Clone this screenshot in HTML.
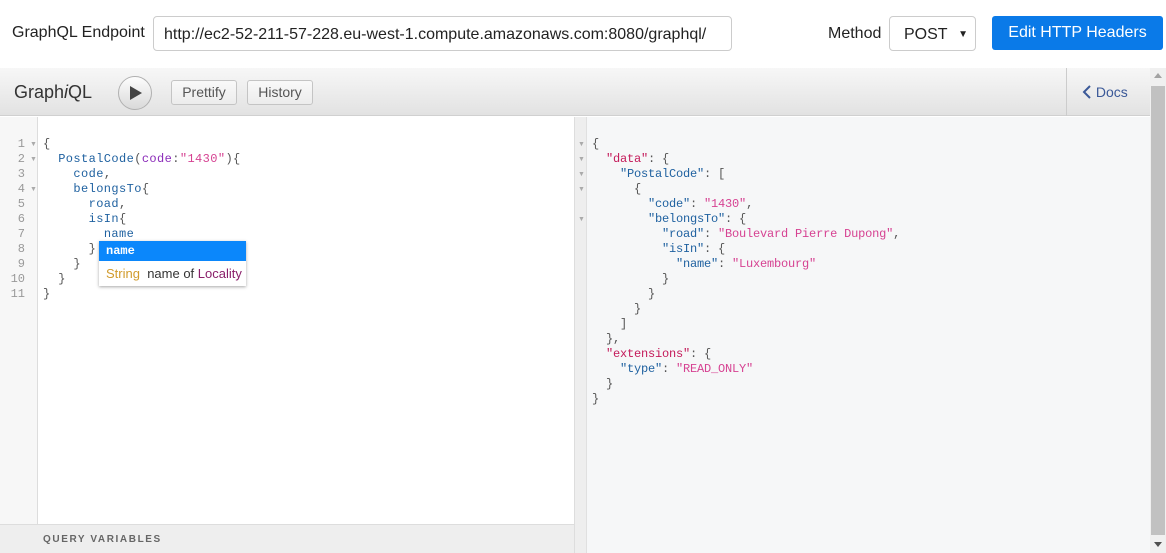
<!DOCTYPE html>
<html><head><meta charset="utf-8"><style>
*{margin:0;padding:0;box-sizing:border-box}
body{width:1166px;height:553px;overflow:hidden;background:#fff;font-family:"Liberation Sans",Arial,sans-serif;position:relative}
.abs{position:absolute}
.mono{font-family:"Liberation Mono",monospace;font-size:12px;line-height:15px;white-space:pre}
.q{letter-spacing:0.4px}
.ln{position:absolute;left:0;width:25px;text-align:right;color:#999;font-family:"Liberation Mono",monospace;font-size:12px;line-height:15px}
.fa{position:absolute;color:#aaa;font-size:7px;line-height:15px}
.p{color:#555}.f{color:#1f61a0}.a{color:#8b2bb9}.s{color:#d64292}.k{color:#c41a5a}
.btn{position:absolute;top:80px;height:25px;border:1px solid #c4c4c4;border-radius:3px;background:linear-gradient(#f9f9f9,#ececec);color:#555;font-size:14px;line-height:23px;text-align:center}
</style></head><body>
<div class="abs" style="left:12px;top:24px;font-size:16px;color:#222">GraphQL Endpoint</div>
<div class="abs" style="left:153px;top:16px;width:579px;height:35px;border:1px solid #ccc;border-radius:4px;font-size:16px;line-height:35px;padding-left:10px;color:#222">http://ec2-52-211-57-228.eu-west-1.compute.amazonaws.com:8080/graphql/</div>
<div class="abs" style="left:828px;top:25px;font-size:16px;color:#222">Method</div>
<div class="abs" style="left:889px;top:16px;width:87px;height:35px;border:1px solid #ccc;border-radius:4px;font-size:16px;line-height:35px;padding-left:14px;color:#222">POST<span style="position:absolute;right:7px;font-size:10px">▼</span></div>
<div class="abs" style="left:992px;top:16px;width:171px;height:34px;background:#0a7ae8;border-radius:3px;color:#fff;font-size:16px;line-height:33px;text-align:center">Edit HTTP Headers</div>

<div class="abs" style="left:0;top:68px;width:1150px;height:48px;background:linear-gradient(#f7f7f7,#e2e2e2);border-bottom:1px solid #d0d0d0"></div>
<div class="abs" style="left:14px;top:82px;font-size:18px;color:#333">Graph<i>i</i>QL</div>
<div class="abs" style="left:118px;top:76px;width:34px;height:34px;border-radius:50%;border:1px solid #b0b0b0;background:linear-gradient(#fdfdfd,#d9d9d9)"><svg width="32" height="32" style="position:absolute;left:0;top:0"><path d="M11 9 L23 16 L11 23 Z" fill="#444"/></svg></div>
<div class="btn" style="left:171px;width:66px">Prettify</div>
<div class="btn" style="left:247px;width:66px">History</div>
<div class="abs" style="left:1066px;top:68px;width:1px;height:48px;background:#ccc"></div>
<div class="abs" style="left:1082px;top:84px;font-size:14px;color:#3b5998"><svg width="10" height="14" style="vertical-align:-2px"><path d="M8 1 L2 7 L8 13" stroke="#3b5998" stroke-width="2" fill="none"/></svg> Docs</div>

<div class="abs" style="left:0;top:117px;width:38px;height:407px;background:#f7f7f7;border-right:1px solid #ddd"></div>
<div class="abs" style="left:0;top:137px">
<div class="ln" style="top:0">1</div><div class="ln" style="top:15px">2</div><div class="ln" style="top:30px">3</div><div class="ln" style="top:45px">4</div><div class="ln" style="top:60px">5</div><div class="ln" style="top:75px">6</div><div class="ln" style="top:90px">7</div><div class="ln" style="top:105px">8</div><div class="ln" style="top:120px">9</div><div class="ln" style="top:135px">10</div><div class="ln" style="top:150px">11</div>
<div class="fa" style="left:30px;top:0">▼</div><div class="fa" style="left:30px;top:15px">▼</div><div class="fa" style="left:30px;top:45px">▼</div>
</div>
<div class="abs mono q" style="left:43px;top:137px"><span class="p">{</span>
  <span class="f">PostalCode</span><span class="p">(</span><span class="a">code</span><span class="p">:</span><span class="s">"1430"</span><span class="p">){</span>
    <span class="f">code</span><span class="p">,</span>
    <span class="f">belongsTo</span><span class="p">{</span>
      <span class="f">road</span><span class="p">,</span>
      <span class="f">isIn</span><span class="p">{</span>
        <span class="f">name</span>
      <span class="p">}</span>
    <span class="p">}</span>
  <span class="p">}</span>
<span class="p">}</span></div>
<div class="abs" style="left:99px;top:241px;width:147px;height:45px;background:#fff;box-shadow:0 1px 3px rgba(0,0,0,.35)">
<div style="height:20px;background:#0b87fb;color:#fff;font-family:'Liberation Mono',monospace;font-weight:bold;font-size:12px;line-height:20px;padding-left:7px">name</div>
<div style="font-size:13px;line-height:25px;padding-left:7px;color:#333"><span style="color:#d19b2c">String</span>&nbsp; name of <span style="color:#8a1f6a">Locality</span></div>
</div>
<div class="abs" style="left:0;top:524px;width:574px;height:29px;background:#eee;border-top:1px solid #ddd"></div>
<div class="abs" style="left:43px;top:534px;font-size:10px;font-weight:bold;letter-spacing:1.6px;color:#666">QUERY VARIABLES</div>

<div class="abs" style="left:574px;top:117px;width:13px;height:436px;background:#eee;border-left:1px solid #ddd;border-right:1px solid #e0e0e0"></div>
<div class="abs" style="left:587px;top:117px;width:563px;height:436px;background:#f6f7f8"></div>
<div class="fa" style="left:578px;top:137px">▼</div><div class="fa" style="left:578px;top:152px">▼</div><div class="fa" style="left:578px;top:167px">▼</div><div class="fa" style="left:578px;top:182px">▼</div><div class="fa" style="left:578px;top:212px">▼</div>
<div class="abs mono" style="left:592px;top:137px;letter-spacing:-0.2px"><span class="p">{</span>
  <span class="k">"data"</span><span class="p">: {</span>
    <span class="f">"PostalCode"</span><span class="p">: [</span>
      <span class="p">{</span>
        <span class="f">"code"</span><span class="p">: </span><span class="s">"1430"</span><span class="p">,</span>
        <span class="f">"belongsTo"</span><span class="p">: {</span>
          <span class="f">"road"</span><span class="p">: </span><span class="s">"Boulevard Pierre Dupong"</span><span class="p">,</span>
          <span class="f">"isIn"</span><span class="p">: {</span>
            <span class="f">"name"</span><span class="p">: </span><span class="s">"Luxembourg"</span>
          <span class="p">}</span>
        <span class="p">}</span>
      <span class="p">}</span>
    <span class="p">]</span>
  <span class="p">},</span>
  <span class="k">"extensions"</span><span class="p">: {</span>
    <span class="f">"type"</span><span class="p">: </span><span class="s">"READ_ONLY"</span>
  <span class="p">}</span>
<span class="p">}</span></div>

<div class="abs" style="left:1150px;top:68px;width:16px;height:485px;background:#f0f0f0"></div>
<div class="abs" style="left:1151px;top:86px;width:14px;height:449px;background:#c1c1c1"></div>
<div class="abs" style="left:1154px;top:73px;width:0;height:0;border-left:4px solid transparent;border-right:4px solid transparent;border-bottom:5px solid #a3a3a3"></div>
<div class="abs" style="left:1154px;top:542px;width:0;height:0;border-left:4px solid transparent;border-right:4px solid transparent;border-top:5px solid #505050"></div>
</body></html>
